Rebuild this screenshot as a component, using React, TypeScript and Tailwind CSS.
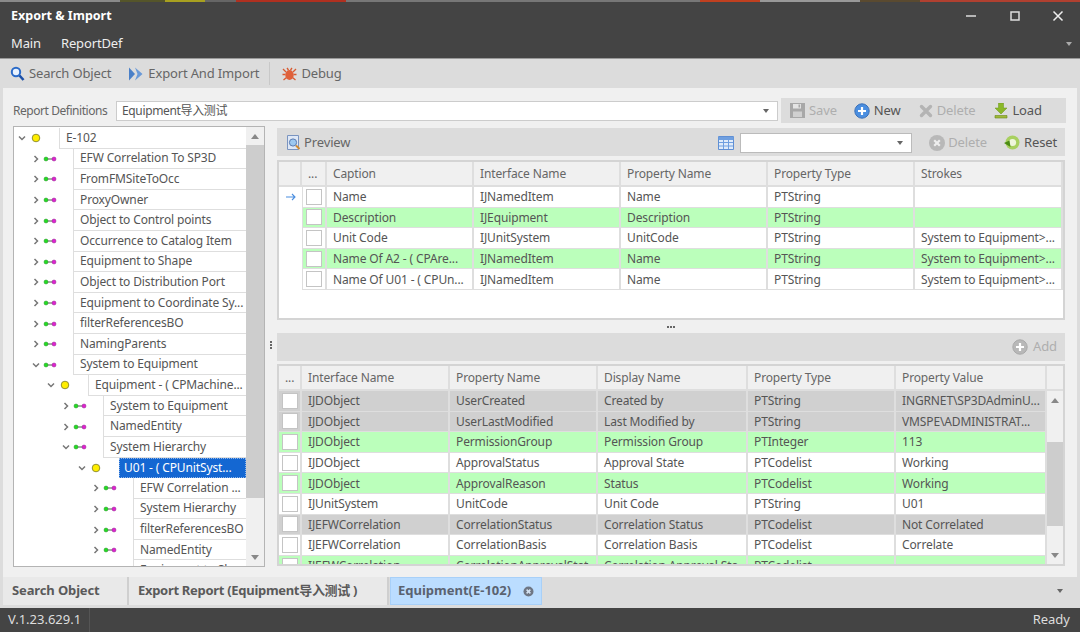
import React from "react";

const FONT = "font-['Noto_Sans','Noto_Sans_CJK_SC',sans-serif]";

type Node = { label: string; depth: number; kind: "link" | "item"; open?: boolean; selected?: boolean };

const TREE: Node[] = [
  { label: "E-102", depth: 0, kind: "item", open: true },
  { label: "EFW Correlation To SP3D", depth: 1, kind: "link" },
  { label: "FromFMSiteToOcc", depth: 1, kind: "link" },
  { label: "ProxyOwner", depth: 1, kind: "link" },
  { label: "Object to Control points", depth: 1, kind: "link" },
  { label: "Occurrence to Catalog Item", depth: 1, kind: "link" },
  { label: "Equipment to Shape", depth: 1, kind: "link" },
  { label: "Object to Distribution Port", depth: 1, kind: "link" },
  { label: "Equipment to Coordinate Sy...", depth: 1, kind: "link" },
  { label: "filterReferencesBO", depth: 1, kind: "link" },
  { label: "NamingParents", depth: 1, kind: "link" },
  { label: "System to Equipment", depth: 1, kind: "link", open: true },
  { label: "Equipment - ( CPMachine...", depth: 2, kind: "item", open: true },
  { label: "System to Equipment", depth: 3, kind: "link" },
  { label: "NamedEntity", depth: 3, kind: "link" },
  { label: "System Hierarchy", depth: 3, kind: "link", open: true },
  { label: "U01 - ( CPUnitSyst...", depth: 4, kind: "item", open: true, selected: true },
  { label: "EFW Correlation ...", depth: 5, kind: "link" },
  { label: "System Hierarchy", depth: 5, kind: "link" },
  { label: "filterReferencesBO", depth: 5, kind: "link" },
  { label: "NamedEntity", depth: 5, kind: "link" },
  { label: "Equipment to Shape", depth: 5, kind: "link" },
];

const GUTTER = ["w-[45px]", "w-[59px]", "w-[74px]", "w-[89px]", "w-[105px]", "w-[119px]"];

const GREEN = "bg-[#bbffbb]";
const GRAY = "bg-[#d0d0d0]";
const WHITE = "bg-white";

const CAPTIONS = [
  { bg: WHITE, cells: ["Name", "IJNamedItem", "Name", "PTString", ""], current: true },
  { bg: GREEN, cells: ["Description", "IJEquipment", "Description", "PTString", ""] },
  { bg: WHITE, cells: ["Unit Code", "IJUnitSystem", "UnitCode", "PTString", "System to Equipment>..."] },
  { bg: GREEN, cells: ["Name Of A2 - ( CPAre...", "IJNamedItem", "Name", "PTString", "System to Equipment>..."] },
  { bg: WHITE, cells: ["Name Of U01 - ( CPUn...", "IJNamedItem", "Name", "PTString", "System to Equipment>..."] },
];

const PROPS = [
  { bg: GRAY, cells: ["IJDObject", "UserCreated", "Created by", "PTString", "INGRNET\\SP3DAdminU..."] },
  { bg: GRAY, cells: ["IJDObject", "UserLastModified", "Last Modified by", "PTString", "VMSPE\\ADMINISTRAT..."] },
  { bg: GREEN, cells: ["IJDObject", "PermissionGroup", "Permission Group", "PTInteger", "113"] },
  { bg: WHITE, cells: ["IJDObject", "ApprovalStatus", "Approval State", "PTCodelist", "Working"] },
  { bg: GREEN, cells: ["IJDObject", "ApprovalReason", "Status", "PTCodelist", "Working"] },
  { bg: WHITE, cells: ["IJUnitSystem", "UnitCode", "Unit Code", "PTString", "U01"] },
  { bg: GRAY, cells: ["IJEFWCorrelation", "CorrelationStatus", "Correlation Status", "PTCodelist", "Not Correlated"] },
  { bg: WHITE, cells: ["IJEFWCorrelation", "CorrelationBasis", "Correlation Basis", "PTCodelist", "Correlate"] },
  { bg: GREEN, cells: ["IJEFWCorrelation", "CorrelationApprovalStat", "Correlation Approval Sta", "PTCodelist", ""] },
];

const TOP_COLS = "grid grid-cols-[23px_25px_147px_147px_147px_147px_1fr]";
const BOTTOM_COLS = "grid grid-cols-[23px_148px_148px_150px_148px_151px]";

const STRIP = [
  ["w-[120px]", "bg-[#8a8a8a]"], ["w-[45px]", "bg-[#55552a]"], ["w-[40px]", "bg-[#a8a020]"], ["w-[31px]", "bg-[#666]"],
  ["w-[110px]", "bg-[#b03020]"], ["w-[354px]", "bg-[#777]"], ["w-[60px]", "bg-[#c04020]"], ["w-[100px]", "bg-[#999]"],
  ["w-[60px]", "bg-[#5a4a30]"], ["w-[160px]", "bg-[#b04030]"],
];

const Chevron = ({ open }: { open?: boolean }) => (
  <svg width="14" height="14" viewBox="0 0 14 14" className="shrink-0">
    <path d={open ? "M4 5.5 7 8.5l3-3" : "M5.5 4 8.5 7l-3 3"} fill="none" stroke="#777" strokeWidth="1.5" />
  </svg>
);

const LinkIcon = () => (
  <svg width="14" height="8" viewBox="0 0 14 8" className="shrink-0">
    <path d="M3 4h8" stroke="#555" strokeWidth="1" />
    <circle cx="3" cy="4" r="2" fill="#22dd22" stroke="#2a8a2a" strokeWidth=".5" />
    <circle cx="11" cy="4" r="2" fill="#e020d0" stroke="#8a2a8a" strokeWidth=".5" />
  </svg>
);

const ItemIcon = () => (
  <svg width="14" height="14" viewBox="0 0 14 14" className="shrink-0">
    <circle cx="7" cy="7" r="3.8" fill="#ffee00" stroke="#77772a" strokeWidth=".8" />
  </svg>
);

const SearchIcon = () => (
  <svg width="15" height="16" viewBox="0 0 15 16" className="shrink-0">
    <circle cx="6" cy="6" r="4.2" fill="#e8f2ff" stroke="#2a6ac8" strokeWidth="2" />
    <path d="m9.5 9.5 4 4.5" stroke="#1c50a8" strokeWidth="2.6" />
  </svg>
);

const ExportIcon = () => (
  <svg width="14" height="16" viewBox="0 0 14 16" className="shrink-0">
    <path d="M0 1.5 6 8l-6 6.5z" fill="#4a80c8" />
    <path d="M6 1.5 13.5 8 6 14.5 8.5 8z" fill="#6a9ad8" />
  </svg>
);

const BugIcon = () => (
  <svg width="15" height="16" viewBox="0 0 15 16" className="shrink-0">
    <path d="M1 3l3 3M14 3l-3 3M.5 8.5h3M14.5 8.5h-3M1.5 14l3-2.5M13.5 14l-3-2.5M5 2l1.5 2M10 2 8.5 4" stroke="#d85a30" strokeWidth="1.3" />
    <ellipse cx="7.5" cy="9" rx="4.2" ry="5" fill="#e0603a" />
  </svg>
);

const SaveIcon = () => (
  <svg width="15" height="15" viewBox="0 0 15 15" className="shrink-0">
    <path d="M0 0h15v15H0z" fill="#a8a8a8" />
    <path d="M3 1h8v4.5H3z" fill="#e4e4e4" />
    <path d="M3 8.5h9V14H3z" fill="#d0d0d0" />
    <path d="M8.5 1.5h1.6v3H8.5z" fill="#a8a8a8" />
  </svg>
);

const CirclePlus = ({ fill, ring }: { fill: string; ring: string }) => (
  <svg width="16" height="16" viewBox="0 0 16 16" className="shrink-0">
    <circle cx="8" cy="8" r="7.2" fill={fill} stroke={ring} strokeWidth="1" />
    <path d="M8 4v8M4 8h8" stroke="#fff" strokeWidth="2.2" />
  </svg>
);

const XIcon = () => (
  <svg width="14" height="14" viewBox="0 0 14 14" className="shrink-0">
    <path d="M2.5 2.5l9 9M11.5 2.5l-9 9" stroke="#b4b4b4" strokeWidth="3.4" strokeLinecap="round" />
  </svg>
);

const LoadIcon = () => (
  <svg width="14" height="16" viewBox="0 0 14 16" className="shrink-0">
    <path d="M4.5 0h5v5H13L7 11 1 5h3.5z" fill="#8ab828" stroke="#6a9418" strokeWidth=".5" />
    <path d="M1 12.5h12V15H1z" fill="#a0b83a" stroke="#6a8a18" strokeWidth=".6" />
  </svg>
);

const PreviewIcon = () => (
  <svg width="14" height="16" viewBox="0 0 14 16" className="shrink-0">
    <path d="M.5.5h11v14H.5z" fill="#dfe8f6" stroke="#7a94c0" />
    <circle cx="6" cy="7.5" r="3.6" fill="#9cc8f0" stroke="#5a7ab0" />
    <path d="m9 10.5 3.5 3.5" stroke="#d08a30" strokeWidth="2" />
  </svg>
);

const GridIcon = () => (
  <svg width="16" height="14" viewBox="0 0 16 14" className="shrink-0">
    <path d="M.5.5h15v13H.5z" fill="#e0ecfa" stroke="#5f8fd4" />
    <path d="M.5 1h15v3H.5z" fill="#6f9fe0" />
    <path d="M5.5 1v12M10.5 1v12M1 6.5h14M1 10h14" stroke="#6f9fe0" />
  </svg>
);

const CircleX = () => (
  <svg width="16" height="16" viewBox="0 0 16 16" className="shrink-0">
    <circle cx="8" cy="8" r="8" fill="#b8b8b8" />
    <path d="M5.2 5.2l5.6 5.6M10.8 5.2l-5.6 5.6" stroke="#eee" strokeWidth="2.2" />
  </svg>
);

const ResetIcon = () => (
  <svg width="16" height="16" viewBox="0 0 16 16" className="shrink-0">
    <circle cx="8.5" cy="7.5" r="7" fill="#a8d060" />
    <circle cx="8.5" cy="7.5" r="3.6" fill="#eef6dc" />
    <path d="M0 8 5.5 5.5 6.5 12z" fill="#4c8c14" />
  </svg>
);

const CurrentArrow = () => (
  <svg width="10" height="8" viewBox="0 0 10 8">
    <path d="M0 4h9M6 1l3 3-3 3" fill="none" stroke="#4a8ee0" strokeWidth="1.1" />
  </svg>
);

const TabClose = () => (
  <svg width="11" height="11" viewBox="0 0 11 11" className="shrink-0">
    <circle cx="5.5" cy="5.5" r="5" fill="#6e7684" />
    <path d="M3.6 3.6l3.8 3.8M7.4 3.6 3.6 7.4" stroke="#d5e3f2" strokeWidth="1.5" />
  </svg>
);

const Caret = () => <div className="h-0 w-0 border-x-[3.5px] border-t-[4px] border-x-transparent border-t-[#666]" />;

const Check = () => <div className="h-[16px] w-[16px] border border-[#c4c4c4] bg-white" />;

const Head = ({ label }: { label: string }) => (
  <div className="flex items-center border-r-2 border-b-2 border-[#dedede] bg-[#f0f0f0] px-[6px] text-[12px] text-[#666]">{label}</div>
);

const Cell = ({ text }: { text: string }) => (
  <div className="flex items-center overflow-hidden whitespace-nowrap border-r-2 border-b border-[#dedede] px-[6px] pt-[1px]">{text}</div>
);

const Tool = ({ icon, label, muted, className }: { icon: React.ReactNode; label: string; muted?: boolean; className?: string }) => (
  <div className={`flex items-center ${muted ? "text-[#aeaeae]" : "text-[#555]"} ${className ?? "gap-[5px]"}`}>
    {icon}
    <span>{label}</span>
  </div>
);

const TreeRow = ({ node }: { node: Node }) => (
  <div className="flex h-[20.6px] shrink-0">
    <div className={`flex shrink-0 items-center justify-end pr-[16px] ${GUTTER[node.depth]}`}>
      <Chevron open={node.open} />
      {node.kind === "link" ? <LinkIcon /> : <ItemIcon />}
    </div>
    <div
      className={
        node.selected
          ? "flex flex-1 items-center overflow-hidden whitespace-nowrap border border-dotted border-[#8fb4e8] bg-[#1467d2] px-[4px] text-white"
          : "flex flex-1 items-center overflow-hidden whitespace-nowrap border-b border-l border-[#dedede] px-[6px]"
      }
    >
      {node.label}
    </div>
  </div>
);

const ScrollArrow = ({ up }: { up?: boolean }) => (
  <div
    className={
      up
        ? "h-0 w-0 border-x-[4px] border-b-[5px] border-x-transparent border-b-[#888]"
        : "h-0 w-0 border-x-[4px] border-t-[5px] border-x-transparent border-t-[#888]"
    }
  />
);

export default function App() {
  return (
    <div className={`flex h-[632px] w-[1080px] flex-col overflow-hidden bg-[#444] text-[12px] tracking-[-0.13px] text-[#555] ${FONT}`}>
      <div className="flex h-[2px] shrink-0">
        {STRIP.map(([w, c], i) => (
          <div key={i} className={`${w} ${c}`} />
        ))}
      </div>

      {/* title bar */}
      <div className="flex h-[28px] shrink-0 items-center pl-[11px] text-[12.5px] font-bold tracking-normal text-white">
        <span>Export &amp; Import</span>
        <div className="ml-auto flex items-center gap-[29px] pr-[15px]">
          <svg width="14" height="14" viewBox="0 0 14 14"><path d="M1 7h10" stroke="#ddd" strokeWidth="1.5" /></svg>
          <svg width="14" height="14" viewBox="0 0 14 14"><path d="M3 3h8v8H3z" fill="none" stroke="#ddd" strokeWidth="1.5" /></svg>
          <svg width="14" height="14" viewBox="0 0 14 14"><path d="m2.5 2.5 9 9M11.5 2.5l-9 9" stroke="#eee" strokeWidth="1.5" /></svg>
        </div>
      </div>
      <div className="flex h-[28px] shrink-0 items-center gap-[20px] pl-[11px] text-[13px] text-[#eee]">
        <span>Main</span>
        <span>ReportDef</span>
        <div className="ml-auto pr-[8px]"><div className="h-0 w-0 border-x-[3.5px] border-t-[4px] border-x-transparent border-t-[#aaa]" /></div>
      </div>

      {/* main toolbar */}
      <div className="flex h-[30px] shrink-0 items-center border-t border-[#999] bg-[#dcdcdc] pl-[10px] text-[13px] tracking-[-0.15px]">
        <Tool icon={<SearchIcon />} label="Search Object" className="gap-[4px] !text-[#666]" />
        <Tool icon={<ExportIcon />} label="Export And Import" className="ml-[18px] gap-[5px] !text-[#666]" />
        <div className="ml-[10px] h-[24px] border-l border-[#c8c8c8]" />
        <Tool icon={<BugIcon />} label="Debug" className="ml-[12px] gap-[4px] !text-[#666]" />
      </div>

      <div className="mx-[3px] flex h-[489px] shrink-0 flex-col bg-[#f0f0f0] px-[10px] pt-[10px] outline-[3px] outline-[#dcdcdc]">
        {/* report row */}
        <div className="flex h-[25px] shrink-0 items-center">
          <span className="w-[103px] shrink-0 pt-[1px] tracking-[-0.45px] text-[#666]">Report Definitions</span>
          <div className="flex h-[20px] w-[662px] shrink-0 items-center justify-between border border-[#ccc] bg-white pl-[5px] pr-[8px]">
            <span className="pt-[1px] tracking-[-0.35px]">Equipment导入测试</span>
            <Caret />
          </div>
          <div className="ml-[3px] flex h-[25px] w-[285px] items-center bg-[#dcdcdc] pl-[9px] text-[13px]">
            <Tool icon={<SaveIcon />} label="Save" muted className="gap-[4px]" />
            <Tool icon={<CirclePlus fill="#4a8ee0" ring="#3a70b8" />} label="New" className="ml-[17px] gap-[4px]" />
            <Tool icon={<XIcon />} label="Delete" muted className="ml-[18px] gap-[4px]" />
            <Tool icon={<LoadIcon />} label="Load" className="ml-[19px] gap-[4px]" />
          </div>
        </div>

        <div className="mt-[3px] flex h-[441px]">
          {/* relation tree */}
          <div className="flex h-full w-[252px] shrink-0 overflow-hidden border border-[#b4b4b4] bg-white text-[12px]">
            <div className="flex flex-1 flex-col overflow-hidden pt-[1px]">
              {TREE.map((n, i) => (
                <TreeRow key={i} node={n} />
              ))}
            </div>
            <div className="flex w-[18px] shrink-0 flex-col bg-[#f0f0f0]">
              <div className="flex h-[18px] items-center justify-center"><ScrollArrow up /></div>
              <div className="h-[353px] bg-[#cdcdcd]" />
              <div className="mt-auto flex h-[18px] items-center justify-center"><ScrollArrow /></div>
            </div>
          </div>

          <div className="flex w-[12px] shrink-0 flex-col items-center justify-center gap-[1px] pb-[3px]">
            <div className="h-[2px] w-[2px] bg-[#666]" />
            <div className="h-[2px] w-[2px] bg-[#666]" />
            <div className="h-[2px] w-[2px] bg-[#666]" />
          </div>

          <div className="flex w-[788px] shrink-0 flex-col pt-[2px]">
            <div className="flex h-[28px] shrink-0 items-center bg-[#dcdcdc] pl-[10px] pt-[1px] text-[13px]">
              <Tool icon={<PreviewIcon />} label="Preview" className="gap-[3px] !text-[#666]" />
              <div className="ml-auto"><GridIcon /></div>
              <div className="ml-[6px] flex h-[20px] w-[172px] items-center justify-end border border-[#bbb] bg-white pr-[8px]"><Caret /></div>
              <Tool icon={<CircleX />} label="Delete" muted className="ml-[17px] gap-[3px]" />
              <Tool icon={<ResetIcon />} label="Reset" className="ml-[17px] mr-[8px] gap-[4px]" />
            </div>

            {/* caption table */}
            <div className="mt-[4px] h-[160px] shrink-0 overflow-hidden border-2 border-[#d4d4d4] bg-white">
              <div className={`${TOP_COLS} h-[25px]`}>
                <Head label="" />
                <Head label="..." />
                <Head label="Caption" />
                <Head label="Interface Name" />
                <Head label="Property Name" />
                <Head label="Property Type" />
                <Head label="Strokes" />
              </div>
              {CAPTIONS.map((r, i) => (
                <div key={i} className={`${TOP_COLS} h-[20.6px]`}>
                  <div className="flex items-center justify-center bg-white">{r.current ? <CurrentArrow /> : null}</div>
                  <div className={`flex items-center justify-center border-r-2 border-b border-l border-[#dedede] ${r.bg}`}><Check /></div>
                  {r.cells.map((c, j) => (
                    <div key={j} className={`flex items-center overflow-hidden whitespace-nowrap border-r-2 border-b border-[#dedede] px-[6px] pt-[1px] ${r.bg}`}>{c}</div>
                  ))}
                </div>
              ))}
            </div>

            <div className="flex h-[13px] shrink-0 items-center justify-center gap-[1px]">
              <div className="h-[2px] w-[2px] bg-[#666]" />
              <div className="h-[2px] w-[2px] bg-[#666]" />
              <div className="h-[2px] w-[2px] bg-[#666]" />
            </div>

            <div className="flex h-[28px] shrink-0 items-center justify-end bg-[#dcdcdc] pr-[8px] text-[13px]">
              <Tool icon={<CirclePlus fill="#b8b8b8" ring="#aaa" />} label="Add" muted />
            </div>

            {/* property table */}
            <div className="mt-[3px] flex h-[202px] shrink-0 flex-col overflow-hidden border-2 border-[#d4d4d4] bg-white">
              <div className="flex h-[25px] shrink-0">
                <div className={`${BOTTOM_COLS} w-[768px] shrink-0`}>
                  <Head label="..." />
                  <Head label="Interface Name" />
                  <Head label="Property Name" />
                  <Head label="Display Name" />
                  <Head label="Property Type" />
                  <Head label="Property Value" />
                </div>
                <div className="flex-1 border-b-2 border-[#dedede] bg-[#f0f0f0]" />
              </div>
              <div className="flex min-h-0 flex-1">
                <div className="w-[768px] shrink-0 overflow-hidden">
                  {PROPS.map((r, i) => (
                    <div key={i} className={`${BOTTOM_COLS} h-[20.6px] ${r.bg}`}>
                      <div className="flex items-center justify-center border-r-2 border-b border-[#dedede]"><Check /></div>
                      {r.cells.map((c, j) => (
                        <Cell key={j} text={c} />
                      ))}
                    </div>
                  ))}
                </div>
                <div className="flex flex-1 flex-col bg-[#f0f0f0]">
                  <div className="flex h-[18px] items-center justify-center"><ScrollArrow up /></div>
                  <div className="mt-[33px] h-[84px] bg-[#cdcdcd]" />
                  <div className="mt-auto flex h-[18px] items-center justify-center"><ScrollArrow /></div>
                </div>
              </div>
            </div>
          </div>
        </div>
      </div>

      {/* open tabs */}
      <div className="flex h-[31px] shrink-0 bg-[#dcdcdc] pb-[3px] pl-[3px] text-[13px] font-bold tracking-[-0.13px] text-[#5a5a5a]">
        <div className="flex w-[126px] items-center border-r-2 border-[#cfcfcf] bg-[#e9e9e9] pl-[9px]">Search Object</div>
        <div className="flex w-[260px] items-center border-r-2 border-[#cfcfcf] bg-[#e9e9e9] pl-[9px] tracking-[-0.3px]">Export Report (Equipment导入测试 )</div>
        <div className="ml-[1px] flex w-[152px] items-center gap-[12px] border border-[#a8d0f8] bg-[#bbddff] pl-[7px] tracking-normal text-[#5a6270]">
          <span>Equipment(E-102)</span>
          <TabClose />
        </div>
        <div className="ml-auto flex items-center pr-[17px]"><Caret /></div>
      </div>

      {/* status bar */}
      <div className="flex h-[24px] shrink-0 items-center text-[13px] tracking-normal text-[#ddd]">
        <div className="flex h-full w-[90px] items-center border-r border-[#555] pl-[8px]">V.1.23.629.1</div>
        <span className="ml-auto pr-[10px]">Ready</span>
      </div>
    </div>
  );
}
